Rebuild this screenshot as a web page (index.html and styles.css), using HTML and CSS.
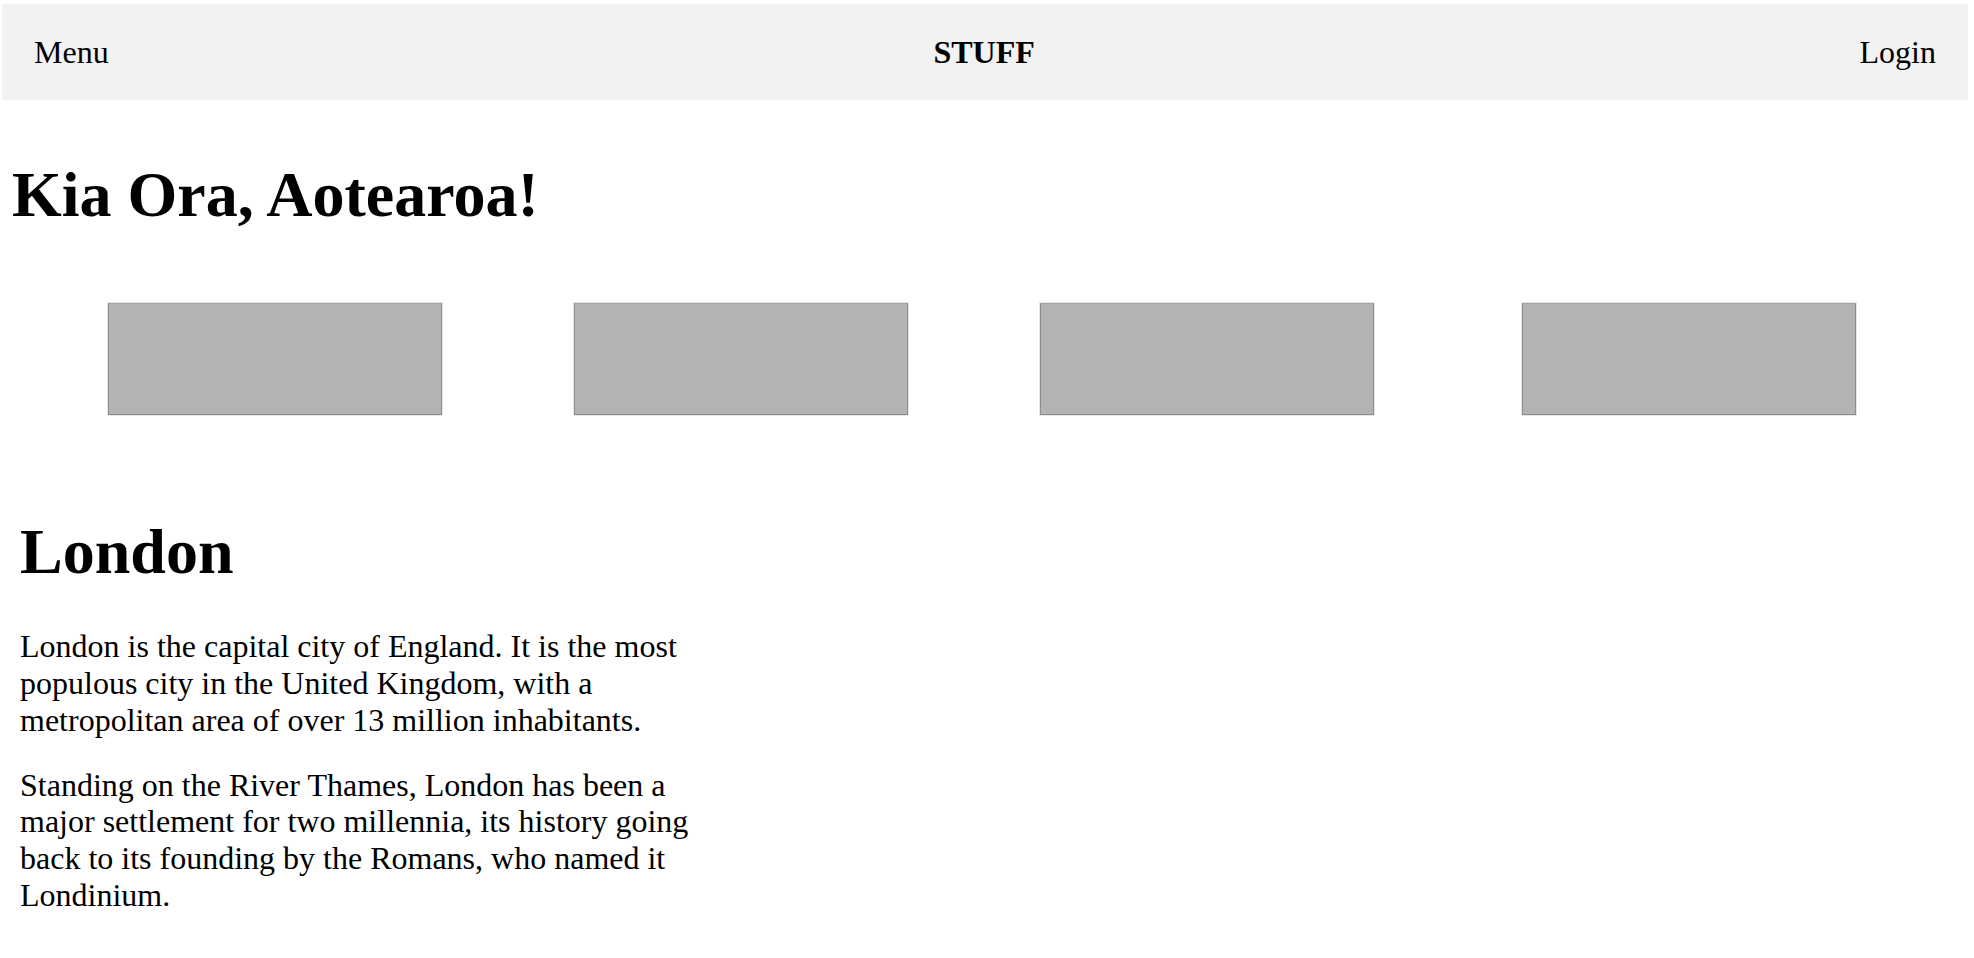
FILE: index.html
```html
<!DOCTYPE html>
<html lang="en">
<head>
<meta charset="utf-8">
<title>STUFF</title>
<link rel="stylesheet" href="styles.css">
</head>
<body>
<header class="topbar">
  <a class="topbar__link">Menu</a>
  <strong class="topbar__brand">STUFF</strong>
  <a class="topbar__link">Login</a>
</header>
<h1 class="greeting">Kia Ora, Aotearoa!</h1>
<div class="gallery">
  <div class="thumb"></div>
  <div class="thumb"></div>
  <div class="thumb"></div>
  <div class="thumb thumb--last"></div>
</div>
<section class="article">
  <h2 class="article__title">London</h2>
  <p class="article__text">London is the capital city of England. It is the most populous city in the United Kingdom, with a metropolitan area of over 13 million inhabitants.</p>
  <p class="article__text article__text--next">Standing on the River Thames, London has been a major settlement for two millennia, its history going back to its founding by the Romans, who named it Londinium.</p>
</section>
</body>
</html>
```

FILE: styles.css
```css
html, body {
  margin: 0;
  padding: 0;
  background: #ffffff;
  color: #000000;
  font-family: "Liberation Serif", "Times New Roman", Times, serif;
}

.topbar {
  margin: 4px 6px 0 2px;
  height: 96px;
  padding: 0 32px;
  background: #f2f2f2;
  display: flex;
  align-items: center;
  justify-content: space-between;
  font-size: 32px;
  line-height: 1.15;
}

.topbar__link {
  color: #000;
  text-decoration: none;
}

.topbar__brand {
  font-weight: bold;
}

.greeting {
  margin: 58px 0 0 12px;
  font-size: 64px;
  line-height: 1.15;
  font-weight: bold;
}

.gallery {
  display: flex;
  gap: 132px;
  margin-top: 71px;
  padding-left: 108px;
}

.thumb {
  width: 332px;
  height: 110px;
  background: #b3b3b3;
  border: 1px solid #8e8e8e;
  border-top-color: #a6a6a6;
  box-shadow: 0 0 0 1px #e6e6e6;
  flex: none;
}

.thumb--last {
  margin-left: 16px;
}

.article {
  margin-top: 100px;
  padding-left: 20px;
  width: 690px;
}

.article__title {
  margin: 0;
  font-size: 64px;
  line-height: 1.15;
  font-weight: bold;
}

.article__text {
  margin: 40px 0 0;
  font-size: 32px;
  line-height: 1.15;
}

.article__text--next {
  margin-top: 28px;
}
```
